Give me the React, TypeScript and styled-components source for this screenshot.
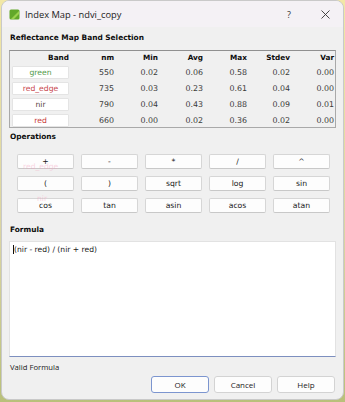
import React from "react";
import styled, { createGlobalStyle } from "styled-components";

const Global = createGlobalStyle`
  html, body { margin: 0; padding: 0; }
  body {
    width: 345px;
    height: 402px;
    overflow: hidden;
    background: linear-gradient(180deg, #f2e7a6 0%, #d9d3a2 60%, #b9c07a 100%);
  }
`;

const Window = styled.div`
  position: relative;
  box-sizing: border-box;
  margin-left: 1px;
  width: 343px;
  height: 400px;
  background: #f0f0f0;
  border: 1px solid #c9c9c9;
  border-radius: 8px;
  overflow: hidden;
  display: flex;
  flex-direction: column;
  font-family: "DejaVu Sans", Verdana, sans-serif;
  font-size: 7.6px;
  color: #111;
`;

const TitleBar = styled.div`
  height: 26px;
  flex: none;
  display: flex;
  align-items: center;
  background: #f4f1f5;
  padding-left: 7px;
`;

const TitleText = styled.span`
  font-family: "Open Sans", "Segoe UI", sans-serif;
  font-size: 9.3px;
  color: #1b1b1b;
  margin-left: 5px;
  flex: 1;
`;

const TitleButton = styled.div`
  width: 36px;
  height: 26px;
  display: flex;
  align-items: center;
  justify-content: center;
  font-family: "Open Sans", sans-serif;
  font-size: 9px;
  color: #333;
`;

const Body = styled.div`
  flex: 1;
  display: flex;
  flex-direction: column;
  padding: 0 7px 0 7px;
`;

const SectionLabel = styled.div<{ $top: number }>`
  font-weight: bold;
  font-size: 7.4px;
  line-height: 12px;
  height: 12px;
  margin-top: ${(p) => p.$top}px;
  margin-left: 1px;
  color: #0d0d0d;
`;

const TableBox = styled.div`
  box-sizing: border-box;
  margin-top: 6px;
  width: 327px;
  height: 78px;
  border: 1px solid #a9a9a9;
  border-top-color: #909090;
  overflow: hidden;
`;

const TableRow = styled.div<{ $h: number }>`
  display: grid;
  grid-template-columns: 59px 45px 44px 45px 44px 43px 44px;
  height: ${(p) => p.$h}px;
  align-items: center;
`;

const HeadCell = styled.div`
  text-align: right;
  font-weight: bold;
  font-size: 7.3px;
  white-space: nowrap;
  color: #0d0d0d;
`;

const Cell = styled.div`
  text-align: right;
  color: #3a3a3a;
  white-space: nowrap;
  font-size: 7.9px;
`;

const BandChip = styled.div<{ $color: string }>`
  box-sizing: border-box;
  margin-left: 2px;
  width: 57px;
  height: 13px;
  background: #ffffff;
  border: 1px solid #e4e4e4;
  border-radius: 1px;
  display: flex;
  align-items: center;
  justify-content: center;
  color: ${(p) => p.$color};
  font-size: 7.7px;
`;

const OpsGrid = styled.div`
  margin-top: 11px;
  margin-left: 8px;
  display: grid;
  grid-template-columns: repeat(5, 57px);
  grid-auto-rows: 15px;
  column-gap: 7px;
  row-gap: 7px;
`;

const OpButton = styled.div`
  box-sizing: border-box;
  background: #fdfdfd;
  border: 1px solid #d6d6d6;
  border-bottom-color: #c8c8c8;
  border-radius: 2px;
  display: flex;
  align-items: center;
  justify-content: center;
  color: #1a1a1a;
  font-size: 7.7px;
`;

const DragGhost = styled.div<{ $x: number; $y: number }>`
  position: absolute;
  left: ${(p) => p.$x}px;
  top: ${(p) => p.$y}px;
  font-size: 7.6px;
  color: #f5a6c2;
  opacity: 0.45;
  pointer-events: none;
`;

const FormulaBox = styled.div`
  box-sizing: border-box;
  margin-top: 5px;
  height: 116px;
  width: 327px;
  background: #ffffff;
  border: 1px solid #e2e2e2;
  border-bottom: 1px solid #7d8fbf;
  padding: 2px 3px;
`;

const FormulaLine = styled.div`
  display: flex;
  align-items: center;
  height: 10px;
  font-size: 7.6px;
  color: #1a1a1a;
  white-space: pre;
`;

const Caret = styled.span`
  display: inline-block;
  width: 1px;
  height: 9px;
  background: #111;
`;

const Status = styled.div`
  margin-top: 4px;
  height: 12px;
  line-height: 12px;
  margin-left: 1px;
  font-family: "Open Sans", "Segoe UI", sans-serif;
  font-size: 7.7px;
  color: #1b1b1b;
`;

const Footer = styled.div`
  margin-top: 3px;
  display: flex;
  justify-content: flex-end;
  gap: 5px;
  padding-right: 1px;
`;

const DialogButton = styled.div<{ $primary?: boolean }>`
  box-sizing: border-box;
  width: 58px;
  height: 17px;
  background: #fdfdfd;
  border: 1px solid ${(p) => (p.$primary ? "#7c95cf" : "#d3d3d3")};
  border-radius: 3px;
  display: flex;
  align-items: center;
  justify-content: center;
  font-family: "Open Sans", "Segoe UI", sans-serif;
  font-size: 8px;
  color: #1b1b1b;
`;

const bands = [
  { name: "green", color: "#4f9a4a", v: ["550", "0.02", "0.06", "0.58", "0.02", "0.00"] },
  { name: "red_edge", color: "#c8484e", v: ["735", "0.03", "0.23", "0.61", "0.04", "0.00"] },
  { name: "nir", color: "#5a4444", v: ["790", "0.04", "0.43", "0.88", "0.09", "0.01"] },
  { name: "red", color: "#c83838", v: ["660", "0.00", "0.02", "0.36", "0.02", "0.00"] },
];

const ops = [
  "+", "-", "*", "/", "^",
  "(", ")", "sqrt", "log", "sin",
  "cos", "tan", "asin", "acos", "atan",
];

function AppIcon() {
  return (
    <svg width="11" height="11" viewBox="0 0 11 11">
      <rect x="0.5" y="0.5" width="10" height="10" rx="1.5" fill="#62a82a" />
      <path d="M2 10 L10 2 L10 5 L5 10 Z" fill="#9bd24e" />
    </svg>
  );
}

function CloseIcon() {
  return (
    <svg width="9" height="9" viewBox="0 0 9 9">
      <path d="M0.5 0.5 L8.5 8.5 M8.5 0.5 L0.5 8.5" stroke="#333" strokeWidth="0.9" />
    </svg>
  );
}

export default function App() {
  return (
    <>
      <Global />
      <Window>
        <TitleBar>
          <AppIcon />
          <TitleText>Index Map - ndvi_copy</TitleText>
          <TitleButton>?</TitleButton>
          <TitleButton>
            <CloseIcon />
          </TitleButton>
        </TitleBar>
        <Body>
          <SectionLabel $top={5}>Reflectance Map Band Selection</SectionLabel>
          <TableBox>
            <TableRow $h={13}>
              {["Band", "nm", "Min", "Avg", "Max", "Stdev", "Var"].map((h) => (
                <HeadCell key={h}>{h}</HeadCell>
              ))}
            </TableRow>
            {bands.map((b) => (
              <TableRow $h={16} key={b.name}>
                <BandChip $color={b.color}>{b.name}</BandChip>
                {b.v.map((x, i) => (
                  <Cell key={i}>{x}</Cell>
                ))}
              </TableRow>
            ))}
          </TableBox>
          <SectionLabel $top={3}>Operations</SectionLabel>
          <OpsGrid>
            {ops.map((o) => (
              <OpButton key={o}>{o}</OpButton>
            ))}
          </OpsGrid>
          <SectionLabel $top={11}>Formula</SectionLabel>
          <FormulaBox>
            <FormulaLine>
              <Caret />
              (nir - red) / (nir + red)
            </FormulaLine>
          </FormulaBox>
          <Status>Valid Formula</Status>
          <Footer>
            <DialogButton $primary>OK</DialogButton>
            <DialogButton>Cancel</DialogButton>
            <DialogButton>Help</DialogButton>
          </Footer>
        </Body>
        <DragGhost $x={21} $y={161}>red_edge</DragGhost>
        <DragGhost $x={35} $y={193}>nir</DragGhost>
      </Window>
    </>
  );
}
